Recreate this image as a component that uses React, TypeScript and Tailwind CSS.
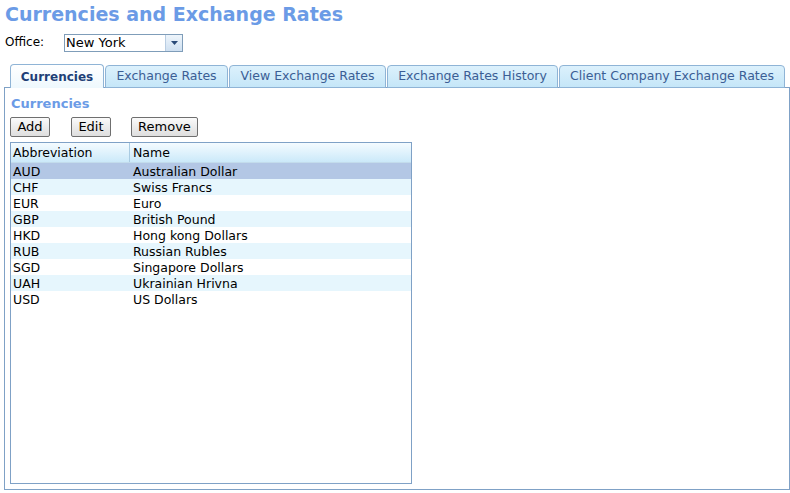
import React from "react";

const rows: [string, string][] = [
  ["AUD", "Australian Dollar"],
  ["CHF", "Swiss Francs"],
  ["EUR", "Euro"],
  ["GBP", "British Pound"],
  ["HKD", "Hong kong Dollars"],
  ["RUB", "Russian Rubles"],
  ["SGD", "Singapore Dollars"],
  ["UAH", "Ukrainian Hrivna"],
  ["USD", "US Dollars"],
];

const tabs: { label: string; w: string }[] = [
  { label: "Exchange Rates", w: "w-[123px]" },
  { label: "View Exchange Rates", w: "w-[157px]" },
  { label: "Exchange Rates History", w: "w-[171px]" },
  { label: "Client Company Exchange Rates", w: "w-[226px]" },
];

function Btn({ label, w }: { label: string; w: string }) {
  return (
    <button
      className={`${w} h-[20px] border border-[#6f6f6f] rounded-[2px] bg-gradient-to-b from-[#fafafa] to-[#dedede] text-[13px] leading-[18px] text-black`}
    >
      {label}
    </button>
  );
}

export default function App() {
  return (
    <div className="w-[790px] h-[493px] bg-white overflow-hidden font-['DejaVu_Sans',Verdana,sans-serif] text-black">
      <div className="h-[28px] pl-[5px] text-[19px] font-bold leading-[28px] text-[#6b9be6]">
        Currencies and Exchange Rates
      </div>
      <div className="flex items-center h-[18px] mt-[6px] pl-[5px]">
        <span className="w-[59px] text-[12px] leading-[16px] -mt-[3px]">Office:</span>
        <div className="flex w-[119px] h-[18px] border border-[#7f9db9] bg-white">
          <span className="flex-1 pl-[1px] text-[13px] leading-[16px]">New York</span>
          <span className="w-[17px] h-full flex items-center justify-center border-l border-[#b9cde2] bg-gradient-to-b from-[#eef5fb] to-[#cfe0f1]">
            <svg width="7" height="4" viewBox="0 0 7 4">
              <path d="M0 0H7L3.5 4Z" fill="#2a4a78" />
            </svg>
          </span>
        </div>
      </div>
      <div className="flex gap-[1px] pl-[10px] mt-[12px] h-[24px] relative z-10">
        <div className="w-[94px] h-[24px] border border-b-0 border-[#8fb4d6] rounded-t-[4px] bg-gradient-to-b from-white to-[#eef8fd] text-[12px] font-bold text-[#1e3f77] flex items-center justify-center">
          Currencies
        </div>
        {tabs.map((t) => (
          <div
            key={t.label}
            className={`${t.w} h-[23px] mt-[1px] border border-[#8fb4d6] rounded-t-[4px] bg-gradient-to-b from-[#dcf1fc] to-[#c5e6f8] text-[12.5px] text-[#3b5e95] flex items-center justify-center`}
          >
            {t.label}
          </div>
        ))}
      </div>
      <div className="ml-[4px] w-[786px] h-[403px] -mt-[1px] border border-[#7fa1c6] pl-[5px]">
        <div className="mt-[8px] ml-[1px] h-[16px] text-[13px] font-bold leading-[16px] text-[#6b9be6]">
          Currencies
        </div>
        <div className="flex mt-[5px]">
          <Btn label="Add" w="w-[40px]" />
          <div className="w-[21px]" />
          <Btn label="Edit" w="w-[40px]" />
          <div className="w-[20px]" />
          <Btn label="Remove" w="w-[67px]" />
        </div>
        <div className="mt-[5px] w-[402px] h-[342px] border border-[#7fa1c6] bg-white">
          <div className="flex h-[20px] border-b border-[#c3dcec] bg-gradient-to-b from-[#f4fbff] to-[#cbe9f9] text-[12.5px] leading-[20px]">
            <div className="w-[119px] pl-[2px] border-r border-[#a9cbe2]">Abbreviation</div>
            <div className="pl-[3px]">Name</div>
          </div>
          {rows.map(([a, n], i) => (
            <div
              key={a}
              className={`flex h-[16px] text-[12.5px] leading-[17px] ${
                i === 0 ? "bg-[#b3c7e5]" : i % 2 === 1 ? "bg-[#e6f6fd]" : "bg-white"
              }`}
            >
              <div className="w-[120px] pl-[2px]">{a}</div>
              <div className="pl-[2px]">{n}</div>
            </div>
          ))}
        </div>
      </div>
    </div>
  );
}
